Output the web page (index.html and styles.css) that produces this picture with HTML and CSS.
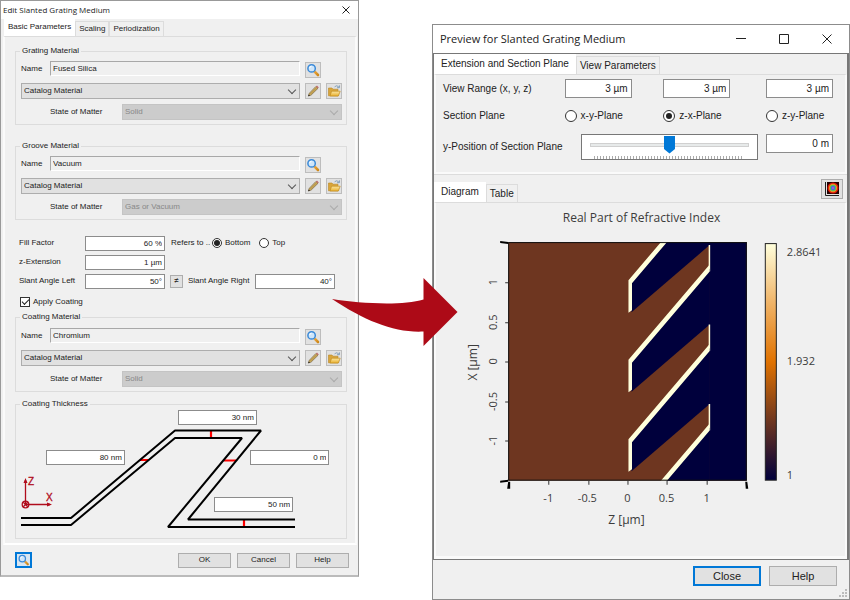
FILE: index.html
```html
<!DOCTYPE html>
<html lang="en">
<head>
<meta charset="utf-8">
<title>Slanted Grating Medium</title>
<link rel="stylesheet" href="styles.css">
</head>
<body>
<svg class="defs" aria-hidden="true">
  <defs>
    <linearGradient id="handle" x1="0" y1="0" x2="1" y2="1"><stop offset="0" stop-color="#e8a33a"/><stop offset="1" stop-color="#d08a1c"/></linearGradient>
    <linearGradient id="folder" x1="0" y1="0" x2="0" y2="1"><stop offset="0" stop-color="#fbe6a2"/><stop offset="1" stop-color="#e9b02e"/></linearGradient>
    <symbol id="lens" viewBox="0 0 14 14">
      <path d="M8.6 8.6L12 12" stroke="url(#handle)" stroke-width="2.6" stroke-linecap="round"/>
      <circle cx="5.6" cy="5.4" r="3.7" fill="#cfe6fa" stroke="#3b8ad8" stroke-width="1.5"/>
      <path d="M3.6 5.2A2.2 2.2 0 0 1 5.6 3.2" fill="none" stroke="#fff" stroke-width="1"/>
    </symbol>
    <symbol id="pencil" viewBox="0 0 14 14">
      <path d="M2.4 12L3.4 9.2L10 2.4L12 4.3L5.2 11Z" fill="#dfbd62" stroke="#6d5a3c" stroke-width=".7"/>
      <path d="M4.3 10.2L11 3.4" stroke="#8a6930" stroke-width=".7"/>
      <path d="M10 2.4L11 1.5L12.8 3.4L12 4.3Z" fill="#c06a6a"/>
      <path d="M2.2 12.2L2.8 10.5L4 11.6Z" fill="#222"/>
    </symbol>
    <symbol id="open" viewBox="0 0 14 14">
      <path d="M1.500 11.8V4H5l1 1.2h5V12Z" fill="#d9a53a" stroke="#b98625" stroke-width=".6"/>
      <path d="M3 12L4.6 7.2H13.2L11.4 12Z" fill="url(#folder)" stroke="#c48f22" stroke-width=".7"/>
      <path d="M7.6 3.2C8.6 1.4 10.6 1.4 11.6 3M12.4 1.4V3.7H10.1" fill="none" stroke="#7395b5" stroke-width=".9"/>
    </symbol>
  </defs>
</svg>

<main class="scene">
  <section class="dialog edit">
    <header class="titlebar">
      <h1>Edit Slanted Grating Medium</h1>
      <button class="caption" aria-label="Close"><svg viewBox="0 0 8 8"><path d="M.5 .5L7.5 7.5M7.5 .5L.5 7.5"/></svg></button>
    </header>
    <nav class="tabs">
      <button class="tab active">Basic Parameters</button>
      <button class="tab">Scaling</button>
      <button class="tab">Periodization</button>
    </nav>
    <div class="panel">
      <fieldset class="group">
        <legend>Grating Material</legend>
        <div class="row name-row">
          <label for="n1">Name</label><input id="n1" class="flat" value="Fused Silica" readonly>
          <button class="icon" aria-label="View"><svg><use href="#lens"/></svg></button>
        </div>
        <div class="row">
          <span class="combo"><select aria-label="Grating material source"><option>Catalog Material</option></select></span>
          <button class="icon" aria-label="Edit"><svg><use href="#pencil"/></svg></button>
          <button class="icon" aria-label="Load"><svg><use href="#open"/></svg></button>
        </div>
        <div class="row state-row">
          <label for="s1">State of Matter</label>
          <span class="combo off"><select id="s1" disabled><option>Solid</option></select></span>
        </div>
      </fieldset>

      <fieldset class="group">
        <legend>Groove Material</legend>
        <div class="row name-row">
          <label for="n2">Name</label><input id="n2" class="flat" value="Vacuum" readonly>
          <button class="icon" aria-label="View"><svg><use href="#lens"/></svg></button>
        </div>
        <div class="row">
          <span class="combo"><select aria-label="Groove material source"><option>Catalog Material</option></select></span>
          <button class="icon" aria-label="Edit"><svg><use href="#pencil"/></svg></button>
          <button class="icon" aria-label="Load"><svg><use href="#open"/></svg></button>
        </div>
        <div class="row state-row">
          <label for="s2">State of Matter</label>
          <span class="combo off"><select id="s2" disabled><option>Gas or Vacuum</option></select></span>
        </div>
      </fieldset>

      <div class="shape">
        <div class="shape-row">
          <label for="fill">Fill Factor</label><input id="fill" class="num" value="60 %">
          <span class="refers">Refers to ..</span>
          <label class="choice"><input type="radio" name="ref" checked>Bottom</label>
          <label class="choice"><input type="radio" name="ref">Top</label>
        </div>
        <div class="shape-row">
          <label for="zext">z-Extension</label><input id="zext" class="num" value="1 µm">
        </div>
        <div class="shape-row">
          <label for="sl">Slant Angle Left</label><input id="sl" class="num" value="50°">
          <button class="link-btn" aria-label="Angles differ">≠</button>
          <label for="sr" class="right-label">Slant Angle Right</label><input id="sr" class="num" value="40°">
        </div>
      </div>
      <label class="choice coating"><input type="checkbox" checked>Apply Coating</label>

      <fieldset class="group">
        <legend>Coating Material</legend>
        <div class="row name-row">
          <label for="n3">Name</label><input id="n3" class="flat" value="Chromium" readonly>
          <button class="icon" aria-label="View"><svg><use href="#lens"/></svg></button>
        </div>
        <div class="row">
          <span class="combo"><select aria-label="Coating material source"><option>Catalog Material</option></select></span>
          <button class="icon" aria-label="Edit"><svg><use href="#pencil"/></svg></button>
          <button class="icon" aria-label="Load"><svg><use href="#open"/></svg></button>
        </div>
        <div class="row state-row">
          <label for="s3">State of Matter</label>
          <span class="combo off"><select id="s3" disabled><option>Solid</option></select></span>
        </div>
      </fieldset>

      <fieldset class="group thickness">
        <legend>Coating Thickness</legend>
        <div class="profile">
          <svg viewBox="16 410 330 128" aria-hidden="true">
            <g stroke="#f00" stroke-width="2.2">
              <path d="M211 430V438M140 460H148M224 460.500H236M244 520V527"/>
            </g>
            <g fill="none" stroke="#000" stroke-width="2" stroke-linejoin="bevel">
              <path d="M21 518H71L175 430.500H261L188 519.500H295"/>
              <path d="M21 525H71L175 438H242L168 527H295"/>
            </g>
            <g stroke="#b00c1c" stroke-width="1.300" fill="none">
              <path d="M25.500 504V480M25.500 504.500H50"/>
              <path d="M25.500 478L23.500 483H27.500ZM52 504.500L47 502.500V506.500Z" fill="#b00c1c" stroke="none"/>
              <circle cx="25.500" cy="504.500" r="3.300"/>
              <path d="M23.300 502.300L27.700 506.700M27.700 502.300L23.300 506.700"/>
            </g>
            <text x="28" y="485" class="axis-name">Z</text>
            <text x="46" y="501" class="axis-name">X</text>
          </svg>
          <input class="num top" aria-label="Top thickness" value="30 nm">
          <input class="num left" aria-label="Left thickness" value="80 nm">
          <input class="num right" aria-label="Right thickness" value="0 m">
          <input class="num bottom" aria-label="Bottom thickness" value="50 nm">
        </div>
      </fieldset>
    </div>
    <footer class="buttons">
      <button class="preview" aria-label="Preview"><svg><use href="#lens"/></svg></button>
      <button class="push">OK</button>
      <button class="push">Cancel</button>
      <button class="push">Help</button>
    </footer>
  </section>

  <section class="dialog view">
    <header class="titlebar">
      <h1>Preview for Slanted Grating Medium</h1>
      <button class="caption" aria-label="Minimize"><svg viewBox="0 0 10 10"><path d="M0 4.500H10"/></svg></button>
      <button class="caption" aria-label="Maximize"><svg viewBox="0 0 10 10"><path d="M.5 .5H9.500V9.500H.5Z"/></svg></button>
      <button class="caption" aria-label="Close"><svg viewBox="0 0 10 10"><path d="M.5 .5L9.500 9.500M9.500 .5L.5 9.500"/></svg></button>
    </header>
    <div class="frame">
      <nav class="tabs">
        <button class="tab active">Extension and Section Plane</button>
        <button class="tab">View Parameters</button>
      </nav>
      <div class="panel settings">
        <label for="rx" class="c1">View Range (x, y, z)</label>
        <input id="rx" class="num c2" value="3 µm">
        <input class="num c3" aria-label="View range y" value="3 µm">
        <input class="num c4" aria-label="View range z" value="3 µm">
        <span class="c1">Section Plane</span>
        <label class="choice c2"><input type="radio" name="plane">x-y-Plane</label>
        <label class="choice c3"><input type="radio" name="plane" checked>z-x-Plane</label>
        <label class="choice c4"><input type="radio" name="plane">z-y-Plane</label>
        <div class="position">
          <label for="ypos">y-Position of Section Plane</label>
          <span class="slider"><input id="ypos" type="range" min="0" max="100" value="50"></span>
        </div>
        <input class="num c4 posval" aria-label="y-Position value" value="0 m">
      </div>
      <nav class="tabs second">
        <button class="tab active">Diagram</button>
        <button class="tab">Table</button>
        <button class="color-btn" aria-label="Color table"><svg viewBox="0 0 16 16">
          <path d="M1.500 1V14.500H15" fill="none" stroke="#222" stroke-width="1"/>
          <rect x="3" y="1" width="12" height="12" fill="#200"/>
          <circle cx="9" cy="7" r="5.500" fill="#e01808"/><circle cx="9" cy="7" r="4.200" fill="#f09020"/>
          <circle cx="9" cy="7" r="3.200" fill="#58c050"/><circle cx="9" cy="7" r="2.200" fill="#4868e0"/><circle cx="9" cy="7" r="1" fill="#c050d0"/>
        </svg></button>
      </nav>
      <div class="panel diagram">
        <svg class="chart" viewBox="437 204 408 349" role="img" aria-label="Real Part of Refractive Index">
          <defs>
            <clipPath id="plot"><rect x="509" y="243" width="238" height="238"/></clipPath>
            <linearGradient id="scale" x1="0" y1="0" x2="0" y2="1">
              <stop offset="0" stop-color="#ffffdc"/><stop offset=".25" stop-color="#f0b468"/><stop offset=".5" stop-color="#e07200"/>
              <stop offset=".75" stop-color="#6e3620"/><stop offset="1" stop-color="#00003c"/>
            </linearGradient>
            <g id="groove">
              <path d="M632 282V313L710 246V190Z" fill="#00003c"/>
              <path d="M629 313.500V281L710 186V193L632.500 284V311Z" fill="#ffffdc"/>
              <path d="M709 246H710.500V272H709Z" fill="#ffffdc"/>
            </g>
          </defs>
          <text x="642" y="223" class="title">Real Part of Refractive Index</text>
          <rect x="509" y="243" width="238" height="238" fill="#6e3620"/>
          <g clip-path="url(#plot)">
            <rect x="709.500" y="243" width="38" height="238" fill="#00003c"/>
            <use href="#groove"/>
            <use href="#groove" y="79.300"/>
            <use href="#groove" y="158.600"/>
            <use href="#groove" y="238"/>
          </g>
          <rect x="509.500" y="243.500" width="237" height="237" fill="none" stroke="#111"/>
          <path d="M506 283.500H509M506 323.500H509M506 362.500H509M506 402.500H509M506 441.500H509M549.500 481V485M589.500 481V485M628.500 481V485M667.500 481V485M707.500 481V485" stroke="#333"/>
          <path d="M501 242L509 243V245L501 244ZM501 481L509 480V482L501 483ZM509 482H511V489H508ZM745.500 482H747.500L748.500 489H746Z" fill="#000"/>
          <g class="ticks">
            <text x="549" y="502">-1</text><text x="588" y="502">-0.5</text><text x="628" y="502">0</text><text x="667" y="502">0.5</text><text x="707" y="502">1</text>
            <text transform="translate(498 283) rotate(-90)">1</text>
            <text transform="translate(498 323) rotate(-90)">0.5</text>
            <text transform="translate(498 362) rotate(-90)">0</text>
            <text transform="translate(498 402) rotate(-90)">-0.5</text>
            <text transform="translate(498 441) rotate(-90)">-1</text>
            <text x="627" y="524" class="axis-title">Z [µm]</text>
            <text transform="translate(478 363) rotate(-90)" class="axis-title">X [µm]</text>
          </g>
          <rect x="765.500" y="244.500" width="11" height="236" fill="url(#scale)" stroke="#222"/>
          <g class="legend">
            <text x="787" y="257">2.8641</text><text x="787" y="366">1.932</text><text x="787" y="479">1</text>
          </g>
        </svg>
      </div>
    </div>
    <footer class="buttons">
      <button class="push default">Close</button>
      <button class="push">Help</button>
      <svg class="grip" viewBox="0 0 8 8" aria-hidden="true"><path d="M6 0h2v2h-2zM3 3h2v2h-2zM6 3h2v2h-2zM0 6h2v2h-2zM3 6h2v2h-2zM6 6h2v2h-2z" fill="#bbb"/></svg>
    </footer>
  </section>

  <svg class="arrow" viewBox="332 278 126 68" aria-hidden="true">
    <path d="M332 299C360 303.500 402 306 423.500 299.500V278L457.500 312L423.500 346V331.500C395 333 365 321 332 299Z" fill="#ad0a17"/>
  </svg>
</main>
</body>
</html>
```
FILE: styles.css
```css
* { box-sizing: border-box; }
body { margin: 0; background: #fff; color: #222; font-family: "Liberation Sans", Arial, sans-serif; }
button, input, select { font: inherit; color: inherit; margin: 0; padding: 0; border-radius: 0; }
svg { display: block; }
.defs { position: absolute; width: 0; height: 0; }

.scene { position: relative; display: grid; grid-template-columns: 359fr 418fr; column-gap: 73px; align-items: start; }
.dialog { display: flex; flex-direction: column; background: #f0f0f0; border: 1px solid #999; }
.edit { font-size: 8px; line-height: 12px; border-bottom: 2px solid #bbb; }
.view { margin-top: 24px; font-size: 10px; line-height: 14px; border-color: #8c8c8c; }

.titlebar { display: flex; align-items: center; background: #fff; }
.titlebar h1 { flex: 1; margin: 0; font: 400 11px/14px "Open Sans", sans-serif; color: #222; }
.edit .titlebar { height: 18px; padding: 0 8px 0 2px; }
.edit .titlebar h1 { font-size: 8px; }
.view .titlebar { height: 28px; padding: 0 17px 0 7px; gap: 33px; }
.caption { border: 0; background: none; }
.caption svg { width: 10px; height: 10px; fill: none; stroke: #222; stroke-width: 1; }
.edit .caption svg { width: 8px; height: 8px; }

.tabs { display: flex; align-items: flex-end; height: 17px; padding-left: 3px; }
.tab { height: 15px; padding: 0 3px; border: 1px solid #dcdcdc; border-bottom: 0; background: #f0f0f0; }
.tab.active { height: 17px; padding-bottom: 2px; background: #fff; border-color: #fff; }
.panel { margin: 0 1px 0 2px; border: 2px solid #fafafa; border-top: 1px solid #dcdcdc; background: #f0f0f0; }
.edit .panel { padding: 8px 8px 4px 10px; border-bottom: 2px solid #fff; }

.group { min-width: 0; margin: 0 0 15px; padding: 4px 4px 4px 5px; border: 1px solid #dcdcdc; }
.group legend { padding: 0 2px; margin-left: -1px; }
.row { display: flex; align-items: center; height: 16px; margin-bottom: 5px; gap: 5px; }
.row:last-child { margin-bottom: 0; }
.name-row { height: 17px; padding-right: 21px; }
.name-row label { width: 24px; margin-bottom: 2px; }
.flat { flex: 1; min-width: 0; height: 15px; margin-bottom: 2px; padding: 0 2px; border: 1px solid #fff; border-top: 1px solid #a8a8a8; border-left-color: #a8a8a8; background: #f0f0f0; }
.icon { flex: none; width: 16px; height: 16px; border: 1px solid #bdbdbd; background: #e1e1e1; }
.icon svg { width: 14px; height: 14px; }
.combo { position: relative; flex: 1; height: 16px; }
.combo select { display: block; width: 100%; height: 16px; padding: 0 2px; appearance: none; border: 1px solid #adadad; background: #e1e1e1; opacity: 1; }
.combo::after { content: ""; position: absolute; right: 5px; top: 4px; width: 5px; height: 5px; border: solid #555; border-width: 0 1px 1px 0; transform: rotate(45deg); pointer-events: none; }
.combo.off select { border-color: #c4c4c4; background: #ccc; color: #888; }
.combo.off::after { border-color: #aaa; }
.state-row { padding-left: 29px; }
.state-row label { width: 67px; }

.shape { display: grid; gap: 3px; padding-left: 4px; }
.shape-row { display: flex; align-items: center; height: 16px; }
.shape-row > label:first-child { width: 66px; }
.num { width: 80px; height: 15px; padding: 0 2px; border: 1px solid #8c8c8c; background: #fff; text-align: right; }
.refers { width: 47px; padding-left: 6px; white-space: nowrap; }
.choice { display: flex; align-items: center; gap: 3px; white-space: nowrap; }
.choice + .choice { margin-left: 9px; }
.choice input { flex: none; display: grid; place-items: center; appearance: none; width: 10px; height: 10px; border: 1px solid #333; background: #fff; }
.choice input[type=radio] { border-radius: 50%; }
.choice input[type=radio]:checked::after { content: ""; width: 6px; height: 6px; border-radius: 50%; background: #222; }
.choice input[type=checkbox]:checked::after { content: ""; width: 6px; height: 3px; margin-bottom: 2px; border: solid #222; border-width: 0 0 1px 1px; transform: rotate(-45deg); }
.link-btn { width: 13px; height: 13px; margin: 0 5px; border: 1px solid #adadad; background: #e1e1e1; line-height: 10px; }
.right-label { width: 67px; white-space: nowrap; }
.coating { height: 12px; margin: 7px 0 3px 5px; }
.coating + .group { margin-bottom: 6px; padding-top: 5px; }

.thickness { margin-bottom: 0; padding: 0; }
.thickness legend { margin-left: 4px; }
.profile { position: relative; }
.profile svg { width: 100%; height: auto; }
.profile .num { position: absolute; width: 24%; }
.top { left: 49%; top: 0; }
.left { left: 9%; top: 31%; }
.right { left: 71%; top: 31%; }
.bottom { left: 60%; top: 68%; }
.axis-name { font: 10px "Liberation Sans", sans-serif; fill: #b00c1c; stroke: #b00c1c; stroke-width: .3; }

.buttons { display: flex; align-items: center; justify-content: flex-end; }
.push { border: 1px solid #adadad; background: #e1e1e1; }
.edit .buttons { height: 30px; padding: 0 9px 0 14px; gap: 6px; }
.edit .push { width: 53px; height: 15px; }
.preview { width: 17px; height: 16px; margin-right: auto; border: 2px solid #0078d7; background: #d8e6f2; }
.preview svg { width: 13px; height: 12px; }

.frame { display: flex; flex-direction: column; border: solid #777; border-width: 1px 2px 1px 1px; }
.view .tabs { height: 20px; padding-left: 0; }
.view .tab { height: 18px; padding: 0 3px; }
.view .tab.active { height: 20px; padding: 0 6px 2px; }
.view .panel { margin: 0; }
.settings { display: grid; grid-template-columns: 122fr 99fr 103fr 66px; row-gap: 11px; align-items: center; padding: 4px 13px 12px 7px; }
.view .num { width: 67px; height: 19px; padding: 0 3px; }
.view .choice { gap: 4px; margin: 0; }
.view .choice input { width: 12px; height: 12px; }
.position { grid-column: 1 / 4; display: flex; align-items: center; justify-content: space-between; padding-right: 8px; white-space: nowrap; }
.posval { align-self: start; }
.slider { display: flex; align-items: center; width: 177px; height: 26px; padding: 0 8px; border: 1px solid #777; background: #fff; }
.slider input { appearance: none; width: 100%; height: 24px; background: repeating-linear-gradient(90deg, #aaa 0 1px, #fff 1px 3px) center 21px / 150px 3px no-repeat; }
.slider input::-webkit-slider-runnable-track { height: 4px; margin-bottom: 5px; border: 1px solid #d0d0d0; background: #e7eaea; }
.slider input::-webkit-slider-thumb { appearance: none; width: 11px; height: 18px; margin-top: -8px; background: #0078d7; clip-path: polygon(0 0, 100% 0, 100% 75%, 50% 100%, 0 75%); }
.view .second { height: 28px; border-top: 1px solid #dcdcdc; }
.color-btn { width: 22px; height: 20px; margin: 0 4px 3px auto; padding: 1px 2px; border: 1px solid #adadad; background: #e1e1e1; }
.color-btn svg { width: 16px; height: 16px; }
.chart { width: 100%; height: auto; font: 12px "Open Sans", sans-serif; fill: #3c3c3c; }
.chart .title, .ticks { text-anchor: middle; }
.ticks, .legend { font-size: 11px; }
.axis-title { font-size: 12px; }
.view .diagram { padding-bottom: 3px; border-bottom-width: 3px; }
.view .buttons { position: relative; height: 39px; padding: 0 12px 6px; gap: 8px; font-size: 11px; }
.view .push { width: 68px; height: 20px; }
.view .default { border: 2px solid #0078d7; }
.grip { position: absolute; right: 2px; bottom: 2px; width: 8px; height: 8px; }

.arrow { position: absolute; left: 39%; top: 278px; width: 126px; height: 68px; }
```
